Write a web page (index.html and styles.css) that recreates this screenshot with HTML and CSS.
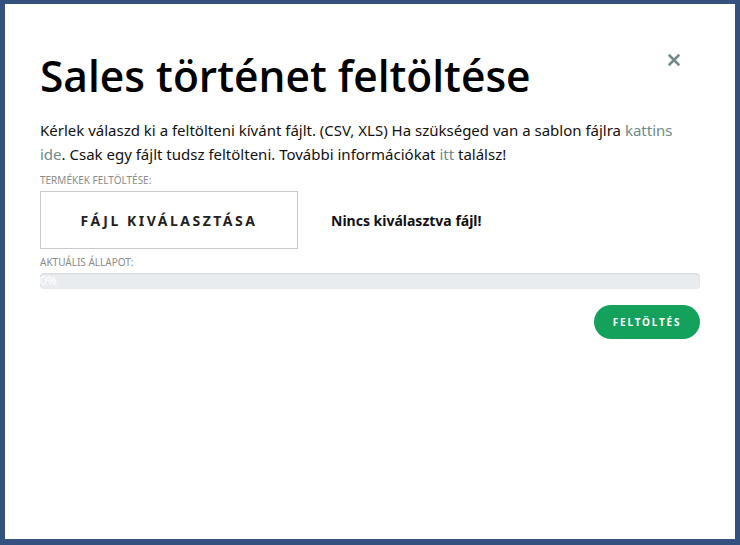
FILE: index.html
```html
<!DOCTYPE html>
<html lang="hu">
<head>
<meta charset="utf-8">
<title>Sales történet feltöltése</title>
<link rel="stylesheet" href="styles.css">
</head>
<body>
<div class="modal">
  <div class="header">
    <h1 class="title">Sales történet feltöltése</h1>
    <span class="close">
      <svg width="12" height="12" viewBox="0 0 12 12"><path d="M1.5 1.5 L10.5 10.5 M10.5 1.5 L1.5 10.5" stroke="#748a8a" stroke-width="2.6" stroke-linecap="round"/></svg>
    </span>
  </div>
  <p class="intro">Kérlek válaszd ki a feltölteni kívánt fájlt. (CSV, XLS) Ha szükséged van a sablon fájlra <a class="link">kattins ide</a>. Csak egy fájlt tudsz feltölteni. További információkat <a class="link">itt</a> találsz!</p>
  <div class="label">TERMÉKEK FELTÖLTÉSE:</div>
  <div class="file-row">
    <div class="file-btn">FÁJL KIVÁLASZTÁSA</div>
    <div class="file-status">Nincs kiválasztva fájl!</div>
  </div>
  <div class="label label-state">AKTUÁLIS ÁLLAPOT:</div>
  <div class="progress"><span class="progress-text">0%</span></div>
  <div class="actions">
    <button class="upload">FELTÖLTÉS</button>
  </div>
</div>
</body>
</html>
```

FILE: styles.css
```css
html, body {
  margin: 0;
  padding: 0;
  height: 100%;
}
body {
  background: #34507e;
  padding: 4px 5px 6px 5px;
  box-sizing: border-box;
  font-family: "Noto Sans", sans-serif;
}
.modal {
  background: #fff;
  height: 100%;
  box-sizing: border-box;
  padding: 44px 35px 0 35px;
}
.header {
  display: flex;
  justify-content: space-between;
  align-items: flex-start;
}
.title {
  margin: 0;
  font-family: "Open Sans", sans-serif;
  font-weight: 600;
  font-size: 42.5px;
  line-height: 56px;
  color: #000;
  letter-spacing: 0;
}
.close {
  margin-top: 6px;
  margin-right: 20px;
  display: flex;
}
.intro {
  margin: 14px 0 0 0;
  font-size: 15px;
  line-height: 24px;
  color: #111;
}
.link {
  color: #6f8a87;
  text-decoration: none;
}
.label {
  margin-top: 7px;
  font-size: 10px;
  color: #8a8a8a;
  line-height: 14px;
}
.file-row {
  display: flex;
  align-items: center;
  margin-top: 4px;
}
.file-btn {
  width: 256px;
  height: 56px;
  border: 1px solid #c9c9d0;
  display: flex;
  align-items: center;
  justify-content: center;
  font-weight: 700;
  font-size: 14px;
  letter-spacing: 2.5px;
  color: #222;
}
.file-status {
  margin-left: 33px;
  font-weight: 700;
  font-size: 14px;
  color: #111;
}
.label-state {
  margin-top: 6px;
}
.progress {
  margin-top: 4px;
  height: 16px;
  background: #e9ecef;
  border-radius: 4px;
  box-shadow: inset 0 1px 2px rgba(0,0,0,0.08);
  display: flex;
  align-items: center;
}
.progress-text {
  color: #fff;
  font-size: 12px;
  line-height: 16px;
  margin-left: 0;
}
.actions {
  display: flex;
  justify-content: flex-end;
  margin-top: 16px;
}
.upload {
  background: #13a15b;
  color: #fff;
  border: none;
  border-radius: 17px;
  width: 106px;
  height: 34px;
  font-family: "Noto Sans", sans-serif;
  font-weight: 700;
  font-size: 10px;
  letter-spacing: 1.8px;
  padding: 0;
}
```
